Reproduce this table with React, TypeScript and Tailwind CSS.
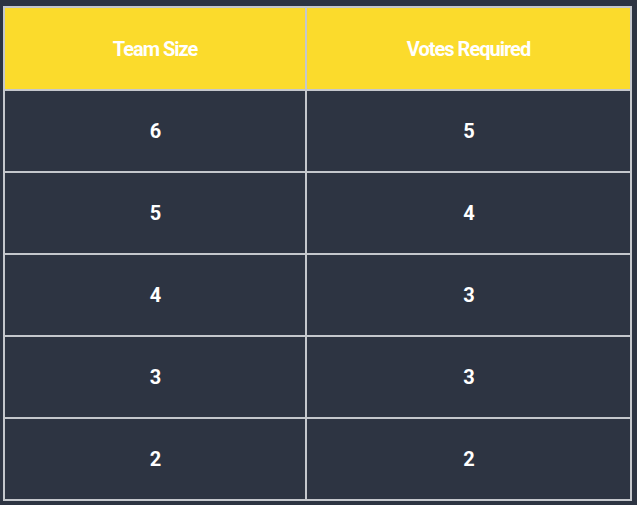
import React from "react";

const rows: [string, string][] = [
  ["6", "5"],
  ["5", "4"],
  ["4", "3"],
  ["3", "3"],
  ["2", "2"],
];

export default function App() {
  return (
    <div
      className="w-[637px] h-[505px] bg-[#2d3442] pt-[6px] pl-[3px]"
      style={{ fontFamily: "Roboto, 'Liberation Sans', sans-serif" }}
    >
      <table className="w-[629px] border-collapse text-white font-bold text-[20px] tracking-[-1px]">
        <thead>
          <tr className="bg-[#fbdb2c] h-[83px]">
            <th className="border-2 border-[#c4c7cc] w-[302px] text-center align-middle">Team Size</th>
            <th className="border-2 border-[#c4c7cc] text-center align-middle">Votes Required</th>
          </tr>
        </thead>
        <tbody>
          {rows.map(([a, b], i) => (
            <tr key={i} className="h-[82px] bg-[#2d3442]">
              <td className="border-2 border-[#c4c7cc] text-center align-middle">{a}</td>
              <td className="border-2 border-[#c4c7cc] text-center align-middle">{b}</td>
            </tr>
          ))}
        </tbody>
      </table>
    </div>
  );
}
